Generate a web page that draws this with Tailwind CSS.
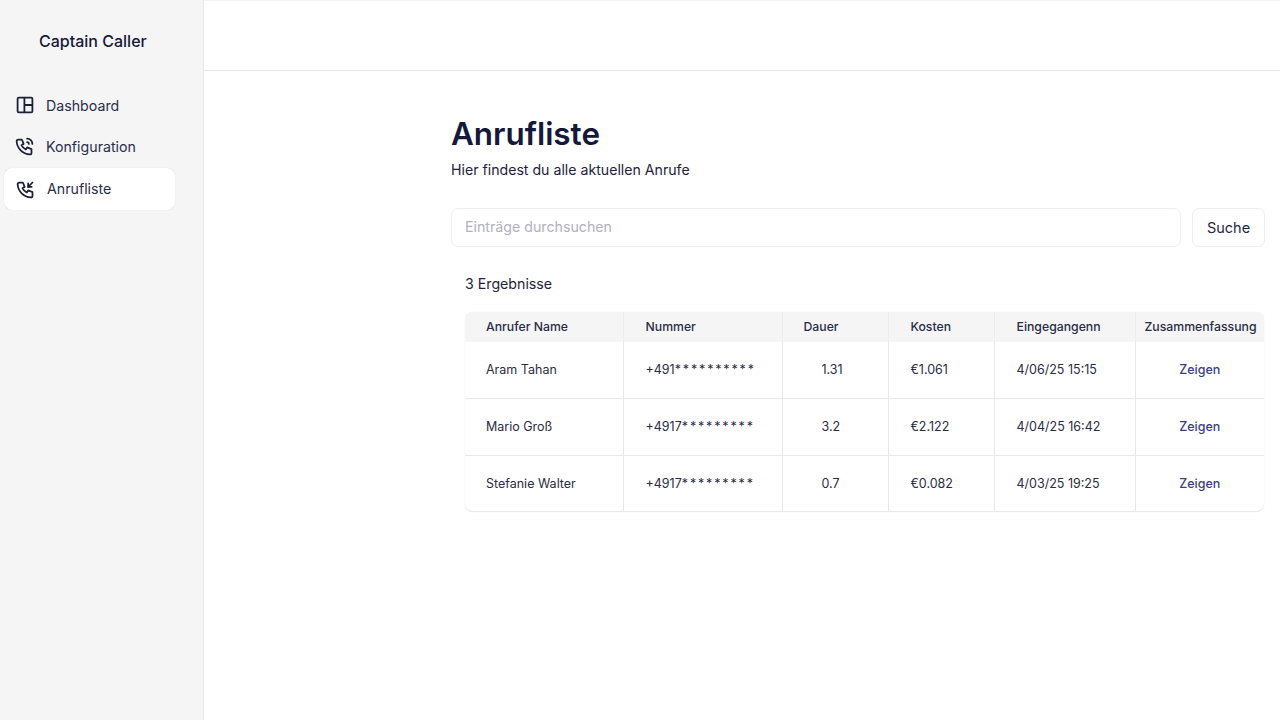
<!DOCTYPE html>
<html lang="de">
<head>
<meta charset="utf-8">
<script src="https://cdn.jsdelivr.net/npm/@tailwindcss/browser@4"></script>
<title>Anrufliste</title>
</head>
<body class="bg-white">
<div class="flex h-[720px] w-[1280px] overflow-hidden font-['Inter',sans-serif] text-[#14183a]">
  <aside class="flex w-[204px] shrink-0 flex-col border-r border-[#e9e9ec] bg-[#f5f5f6]">
    <div class="pt-[31px] pl-[39px] text-[16px] leading-[20px] font-medium">Captain Caller</div>
    <nav class="mt-[33px] flex w-[175px] flex-col pl-[4px] text-[14.2px] text-[#2a2e4d]">
      <a class="flex h-[42px] items-center gap-[12px] pl-[12px]">
        <svg class="h-[18px] w-[18px] shrink-0" viewBox="0 0 18 18" fill="none" stroke="#1c1f38" stroke-width="1.8"><rect x="1.6" y="1.6" width="14.8" height="14.8" rx="1.2"/><path d="M8.4 1.6v14.8M8.4 9h8"/></svg>
        <span class="pt-[1px]">Dashboard</span>
      </a>
      <a class="flex h-[41px] items-center gap-[11px] pl-[10px]">
        <svg class="h-[21px] w-[21px] shrink-0" viewBox="0 0 24 24" fill="none" stroke="#1c1f38" stroke-width="2" stroke-linecap="round" stroke-linejoin="round"><path d="M5 4h4l2 5l-2.5 1.5a11 11 0 0 0 5 5l1.5 -2.5l5 2v4a2 2 0 0 1 -2 2a16 16 0 0 1 -15 -15a2 2 0 0 1 2 -2"/><path d="M15 7a2 2 0 0 1 2 2"/><path d="M15 3a6 6 0 0 1 6 6"/></svg>
        <span>Konfiguration</span>
      </a>
      <a class="mt-[1px] flex h-[42px] items-center gap-[11px] rounded-[8px] border border-white bg-white pl-[10px] shadow-[0_0_1px_rgba(0,0,0,0.14)]">
        <svg class="h-[21px] w-[21px] shrink-0" viewBox="0 0 24 24" fill="none" stroke="#1c1f38" stroke-width="2" stroke-linecap="round" stroke-linejoin="round"><path d="M5 4h4l2 5l-2.5 1.5a11 11 0 0 0 5 5l1.5 -2.5l5 2v4a2 2 0 0 1 -2 2a16 16 0 0 1 -15 -15a2 2 0 0 1 2 -2"/><path d="M15 9l5 -5"/><path d="M15 5v4h4"/></svg>
        <span>Anrufliste</span>
      </a>
    </nav>
  </aside>
  <div class="flex min-w-0 flex-1 flex-col">
    <header class="h-[71px] shrink-0 border-t border-b border-t-[#f4f4f5] border-b-[#e6e6e9]"></header>
    <main class="pt-[44px] pr-[15px] pl-[247px]">
      <h1 class="text-[31.4px] leading-[38px] font-semibold text-[#14183a]">Anrufliste</h1>
      <p class="mt-[7px] text-[14.15px] leading-[20px] text-[#1f2340]">Hier findest du alle aktuellen Anrufe</p>
      <div class="mt-[28px] flex gap-[11px]">
        <div class="flex h-[39px] flex-1 items-center rounded-[7px] border border-[#eeeef0] pb-[1px] pl-[13px] text-[14.2px] text-[#b0b2bf]">Einträge durchsuchen</div>
        <div class="flex h-[39px] w-[73px] items-center justify-center rounded-[7px] border border-[#eeeef0] text-[14.5px] text-[#23263f]">Suche</div>
      </div>
      <p class="mt-[27px] pl-[14px] text-[14.2px] leading-[20px] text-[#1f2340]">3 Ergebnisse</p>
      <div class="mt-[18px] ml-[14px] w-[799px] overflow-hidden rounded-[8px] border-b border-[#e8e8eb] shadow-[0_0_1px_rgba(0,0,0,0.18)]">
        <table class="w-[799px] table-fixed border-collapse text-[12.5px] text-[#2a2d45]">
          <colgroup><col class="w-[158px]"><col class="w-[159px]"><col class="w-[106px]"><col class="w-[106px]"><col class="w-[141px]"><col class="w-[129px]"></colgroup>
          <thead class="bg-[#f5f5f6] text-left text-[12.25px]">
            <tr class="h-[30px]">
              <th class="border-r border-[#ececee] pl-[21px] font-medium">Anrufer Name</th>
              <th class="border-r border-[#ececee] pl-[22px] font-medium">Nummer</th>
              <th class="border-r border-[#ececee] pl-[21px] font-medium">Dauer</th>
              <th class="border-r border-[#ececee] pl-[22px] font-medium">Kosten</th>
              <th class="border-r border-[#ececee] pl-[22px] font-medium">Eingegangenn</th>
              <th class="pl-[9px] font-medium">Zusammenfassung</th>
            </tr>
          </thead>
          <tbody class="[&_td]:pt-[2px]">
            <tr class="h-[56px] border-b border-[#e8e8eb]">
              <td class="border-r border-[#e8e8eb] pl-[21px]">Aram Tahan</td>
              <td class="border-r border-[#e8e8eb] pl-[22px]">+491<span class="tracking-[1.85px]">**********</span></td>
              <td class="border-r border-[#e8e8eb] pl-[39px]">1.31</td>
              <td class="border-r border-[#e8e8eb] pl-[22px]">€1.061</td>
              <td class="border-r border-[#e8e8eb] pl-[22px]">4/06/25 15:15</td>
              <td class="text-center font-medium text-[#3b3f85]">Zeigen</td>
            </tr>
            <tr class="h-[57px] border-b border-[#e8e8eb]">
              <td class="border-r border-[#e8e8eb] pl-[21px]">Mario Groß</td>
              <td class="border-r border-[#e8e8eb] pl-[22px]">+4917<span class="tracking-[1.85px]">*********</span></td>
              <td class="border-r border-[#e8e8eb] pl-[39px]">3.2</td>
              <td class="border-r border-[#e8e8eb] pl-[22px]">€2.122</td>
              <td class="border-r border-[#e8e8eb] pl-[22px]">4/04/25 16:42</td>
              <td class="text-center font-medium text-[#3b3f85]">Zeigen</td>
            </tr>
            <tr class="h-[56px]">
              <td class="border-r border-[#e8e8eb] pl-[21px]">Stefanie Walter</td>
              <td class="border-r border-[#e8e8eb] pl-[22px]">+4917<span class="tracking-[1.85px]">*********</span></td>
              <td class="border-r border-[#e8e8eb] pl-[39px]">0.7</td>
              <td class="border-r border-[#e8e8eb] pl-[22px]">€0.082</td>
              <td class="border-r border-[#e8e8eb] pl-[22px]">4/03/25 19:25</td>
              <td class="text-center font-medium text-[#3b3f85]">Zeigen</td>
            </tr>
          </tbody>
        </table>
      </div>
    </main>
  </div>
</div>
</body>
</html>
